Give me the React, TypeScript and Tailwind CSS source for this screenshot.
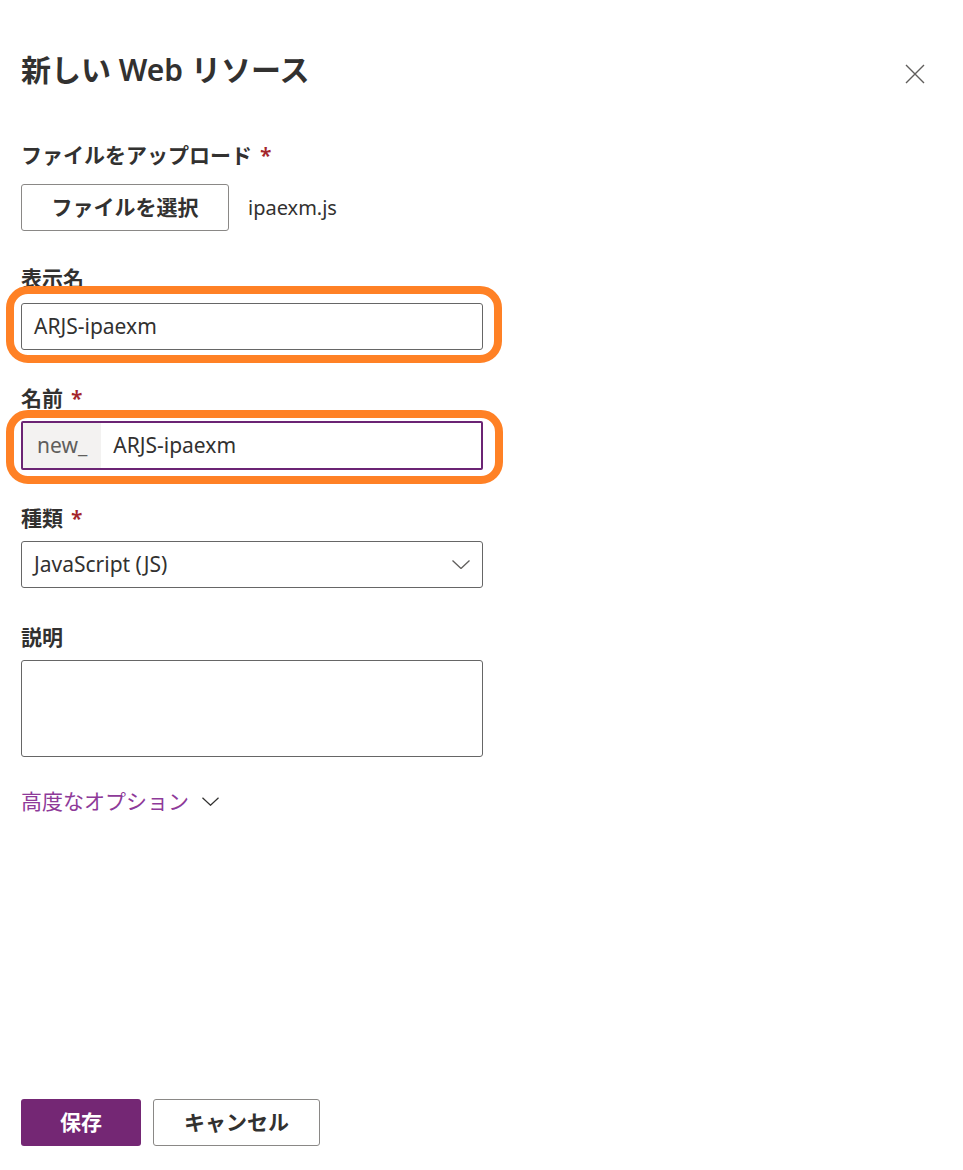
import React from 'react';

const font = { fontFamily: '"Noto Sans", "Noto Sans CJK JP", sans-serif' };

const Label: React.FC<{ text: string; required?: boolean; className?: string }> = ({ text, required, className }) => (
  <div className={`text-[21px] leading-[28px] font-semibold text-[#323130] ${className ?? ''}`}>
    {text}
    {required && <span className="ml-[8px] text-[#a4262c]">*</span>}
  </div>
);

const Chevron: React.FC<{ className?: string }> = ({ className }) => (
  <svg viewBox="0 0 18 9" className={className} fill="none" stroke="currentColor" strokeWidth="1.3">
    <path d="M0.5 0.5 L9 8.5 L17.5 0.5" />
  </svg>
);

export default function App() {
  return (
    <div style={font} className="flex h-[1170px] w-[963px] flex-col bg-white pl-[21px] text-[#323130]">
      <div className="flex items-start justify-between pr-[38px] pt-[50px]">
        <h1 className="text-[30px] font-semibold leading-[40px]">新しい Web リソース</h1>
        <svg viewBox="0 0 20 20" className="mt-[14px] h-[20px] w-[20px] text-[#605e5c]" stroke="currentColor" strokeWidth="1.4">
          <path d="M1 1 L19 19 M19 1 L1 19" />
        </svg>
      </div>

      <Label text="ファイルをアップロード" required className="mt-[51px]" />
      <div className="mt-[15px] flex items-center">
        <button className="h-[47px] w-[208px] rounded-[3px] border border-[#8a8886] text-[21px] font-semibold">
          ファイルを選択
        </button>
        <span className="ml-[19px] text-[20px]">ipaexm.js</span>
      </div>

      <Label text="表示名" className="mt-[33px]" />
      <div className="relative mt-[11px] w-[462px]">
        <div className="flex h-[47px] items-center rounded-[3px] border border-[#666666] px-[12px] text-[21px]">
          ARJS-ipaexm
        </div>
        <div className="pointer-events-none absolute -bottom-[13px] -left-[15px] -right-[19px] -top-[17px] rounded-[22px] border-[8px] border-[#ff8125]" />
      </div>

      <Label text="名前" required className="mt-[34px]" />
      <div className="relative mt-[9px] w-[462px]">
        <div className="flex h-[49px] items-stretch rounded-[2px] border-2 border-[#6b2474] text-[21px]">
          <span className="flex items-center bg-[#f3f2f1] px-[14px] text-[#605e5c]">new_</span>
          <span className="flex items-center pl-[12px]">ARJS-ipaexm</span>
        </div>
        <div className="pointer-events-none absolute -bottom-[14px] -left-[15px] -right-[20px] -top-[11px] rounded-[22px] border-[8px] border-[#ff8125]" />
      </div>

      <Label text="種類" required className="mt-[34px]" />
      <div className="mt-[9px] flex h-[47px] w-[462px] items-center justify-between rounded-[3px] border border-[#666666] pl-[12px] pr-[12px] text-[21px]">
        <span>JavaScript (JS)</span>
        <Chevron className="h-[9px] w-[18px] text-[#605e5c]" />
      </div>

      <Label text="説明" className="mt-[35px]" />
      <div className="mt-[9px] h-[97px] w-[462px] rounded-[3px] border border-[#666666]" />

      <div className="mt-[30px] flex items-center text-[21px] leading-[28px]">
        <span className="text-[#8e3a99]">高度なオプション</span>
        <Chevron className="ml-[13px] h-[9px] w-[17px] text-[#323130]" />
      </div>

      <div className="mt-auto flex gap-[12px] pb-[24px]">
        <button className="h-[47px] w-[120px] rounded-[3px] bg-[#742774] text-[21px] font-semibold text-white">保存</button>
        <button className="h-[47px] w-[167px] rounded-[3px] border border-[#8a8886] text-[21px] font-semibold">キャンセル</button>
      </div>
    </div>
  );
}
